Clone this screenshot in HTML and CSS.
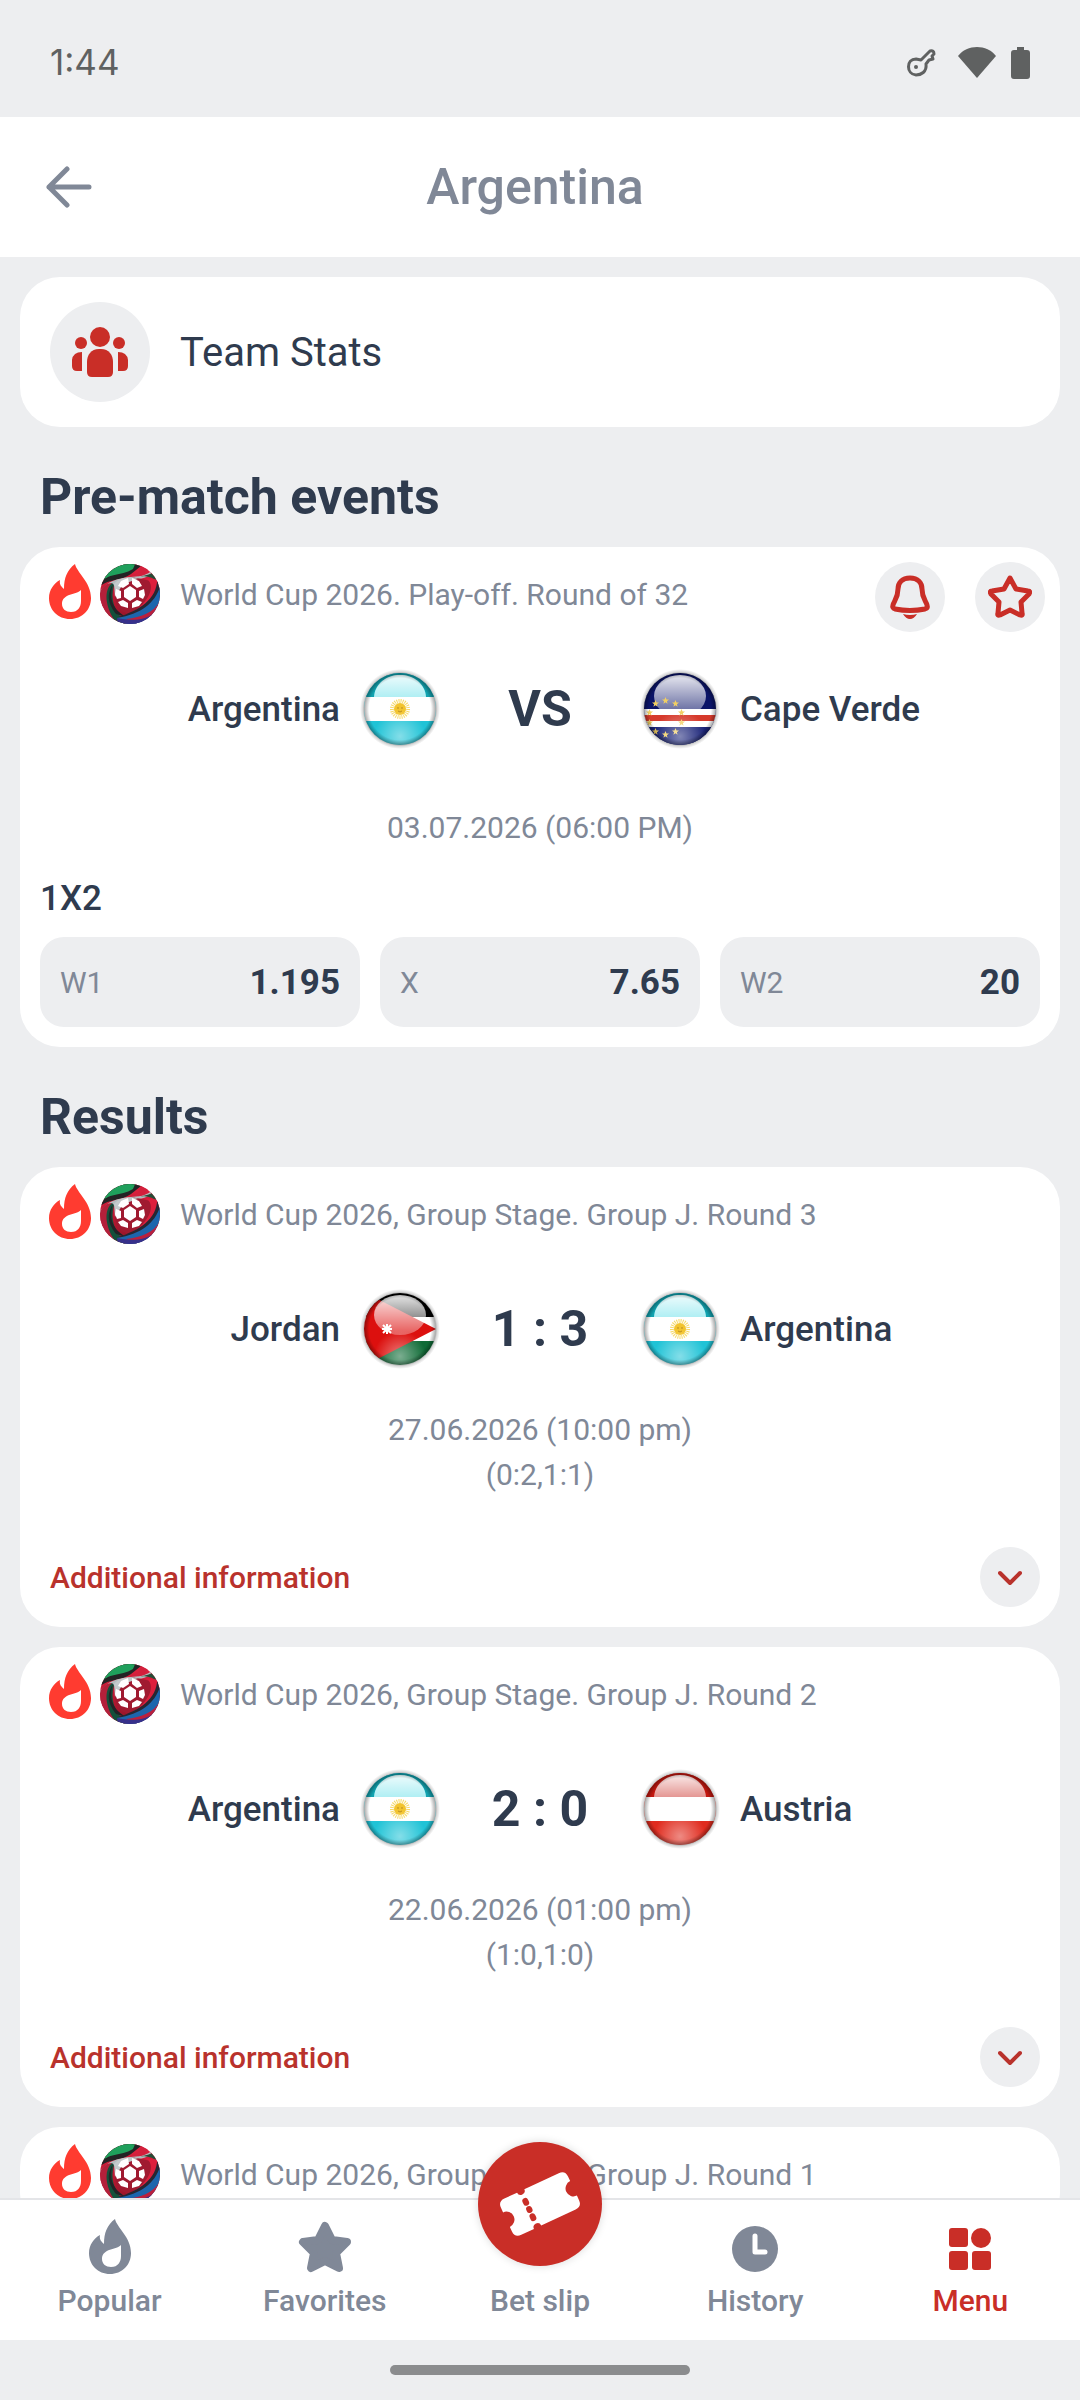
FILE: index.html
```
<!DOCTYPE html>
<html lang="en">
    <head>
        <meta charset="UTF-8" />
        <meta name="viewport" content="width=device-width, initial-scale=1.0" />
        <title>Argentina</title>
        <link rel="stylesheet" href="styles.css">
    </head>
    <body>
        <!-- shared icons -->
        <svg class="sprite" aria-hidden="true">
            <defs>
                <clipPath id="clipFlag"><circle cx="40" cy="40" r="36" /></clipPath>
                <clipPath id="clipBall"><circle cx="30" cy="30" r="30" /></clipPath>
                <radialGradient id="halo">
                    <stop offset="0.86" stop-color="#000" stop-opacity="0.5" />
                    <stop offset="0.93" stop-color="#000" stop-opacity="0.15" />
                    <stop offset="1" stop-color="#000" stop-opacity="0" />
                </radialGradient>
                <radialGradient id="edge">
                    <stop offset="0.86" stop-color="#000" stop-opacity="0" />
                    <stop offset="1" stop-color="#000" stop-opacity="0.35" />
                </radialGradient>
                <radialGradient id="glow" cx="0.5" cy="0.88" r="0.36">
                    <stop offset="0" stop-color="#fff" stop-opacity="0.45" />
                    <stop offset="1" stop-color="#fff" stop-opacity="0" />
                </radialGradient>
                <linearGradient id="shine" x1="0" y1="0" x2="0" y2="1">
                    <stop offset="0" stop-color="#fff" stop-opacity="0.9" />
                    <stop offset="1" stop-color="#fff" stop-opacity="0.3" />
                </linearGradient>
                <linearGradient id="shineSoft" x1="0" y1="0" x2="0" y2="1">
                    <stop offset="0" stop-color="#fff" stop-opacity="0.9" />
                    <stop offset="1" stop-color="#fff" stop-opacity="0.55" />
                </linearGradient>
                <linearGradient id="ballBase" x1="0" y1="0" x2="0" y2="1">
                    <stop offset="0" stop-color="#e02340" />
                    <stop offset="0.5" stop-color="#c01833" />
                    <stop offset="1" stop-color="#8c1426" />
                </linearGradient>
            </defs>

            <symbol id="flame" viewBox="0 0 42 55">
                <path fill-rule="evenodd" d="M26 0C28 9 42 18 42 34C42 46 33 55 21 55C9 55 0 46 0 34C0 26 5 19 11 16C10 21 13 23 15 25C15 14 18 6 26 0ZM32 26C28 31 13 29 13 40C13 45 17 48 22 48C29 48 32 43 32 37Z" />
            </symbol>

            <symbol id="ball" viewBox="0 0 60 60">
                <g clip-path="url(#clipBall)">
                    <rect width="60" height="60" fill="url(#ballBase)" />
                    <path fill="#232425" d="M-2 24C8 14 20 18 31 10L46 -2H-2Z" />
                    <path fill="#1fa05c" d="M0 20C8 8 20 13 33 5L36 -2H-2V20Z" />
                    <path fill="#d2203c" d="M30 12C40 10 41 4 41 -1L49 4C46 10 38 14 28 14Z" />
                    <path fill="#b6bcbe" d="M0 27C12 12 28 14 41 12C49 10 51 7 52 6C52 12 44 15 35 15L22 18L14 22C8 20 4 24 0 30Z" />
                    <path fill="#254b35" d="M36 13C47 12 51 9 54 9L58 17C48 11 42 12 36 13Z" />
                    <path fill="#b3203a" d="M0 29C1 24 6 19 12 19C7 28 7 42 20 60L-2 58V30Z" />
                    <path fill="#14503a" d="M12 19C4 26 4 42 17 60H26C14 46 10 36 14 21Z" />
                    <path fill="#222326" d="M13 20C9 33 11 44 26 53L16 50C6 37 8 28 13 20Z" />
                    <path fill="#a01a30" d="M15 19V34C16 46 25 51 36 50L56 34V18L36 14C26 13 22 18 15 24Z" />
                    <path fill="#c3cacb" d="M14 20C21 12 31 13 38 15L23 20L15 33Z" />
                    <path fill="#dd1f3d" d="M45 14C58 20 48 40 31 49L58 42V16Z" />
                    <path fill="#272733" d="M57 12C59 34 40 46 18 53C45 53 63 43 61 20Z" />
                    <path fill="#1d65ad" d="M61 19C57 37 43 50 17 54L30 62L62 52Z" />
                    <path fill="#ba203d" d="M61 35C55 48 43 53 26 55L29 57C46 57 57 50 61 43Z" />
                    <path fill="#37308b" d="M17 54C30 57 45 57 54 49L44 62H18Z" />
                    <g fill="#fff">
                        <path d="M30 22L36 26V33L30 37L24 33V26Z" />
                        <path d="M21 17L28 14L29 20L23 24L18 22ZM32 14L39 17L42 22L37 24L32 20ZM16 25L21 27V34L17 35L15 30ZM44 25L45 31L43 35L39 33V27ZM18 38L23 36L28 39V44L21 42ZM32 39L37 36L42 38L39 42L32 44Z" />
                    </g>
                </g>
            </symbol>

            <symbol id="gloss" viewBox="0 0 80 80">
                <circle cx="40" cy="40" r="36" fill="url(#glow)" />
                <circle cx="40" cy="40" r="36" fill="url(#edge)" />
            </symbol>

            <symbol id="argentina" viewBox="0 0 80 80">
                <circle cx="40" cy="40" r="40" fill="url(#halo)" />
                <g clip-path="url(#clipFlag)">
                    <rect width="80" height="80" fill="#1fc3d6" />
                    <rect y="28" width="80" height="24" fill="#fff" />
                    <path fill="#12a3b0" d="M0 0H80V28H0Z" />
                    <path fill="#4fdbe6" d="M14 28C15 14 27 6 40 6S65 14 66 28Z" />
                    <path fill="url(#shineSoft)" d="M14 28C15 14 27 6 40 6S65 14 66 28Z" />
                </g>
                <circle cx="40" cy="40" r="8" fill="none" stroke="#f6d968" stroke-width="4" stroke-dasharray="1 1" />
                <circle cx="40" cy="40" r="6" fill="#f2c42f" />
                <path fill="none" stroke="#b98b22" d="M37 39H39M41 39H43M38 42Q40 44 42 42" />
                <use href="#gloss" />
            </symbol>

            <symbol id="austria" viewBox="0 0 80 80">
                <circle cx="40" cy="40" r="40" fill="url(#halo)" />
                <g clip-path="url(#clipFlag)">
                    <rect width="80" height="80" fill="#e02b1e" />
                    <rect y="28" width="80" height="24" fill="#fff" />
                    <path fill="#c4170f" d="M0 0H80V28H0Z" />
                    <path fill="url(#shineSoft)" d="M14 28C15 14 27 6 40 6S65 14 66 28Z" />
                </g>
                <use href="#gloss" />
            </symbol>

            <symbol id="jordan" viewBox="0 0 80 80">
                <circle cx="40" cy="40" r="40" fill="url(#halo)" />
                <g clip-path="url(#clipFlag)">
                    <rect width="80" height="80" fill="#fff" />
                    <rect width="80" height="28" fill="#000" />
                    <rect y="52" width="80" height="28" fill="#0f6b36" />
                    <path fill="#dc100e" d="M0 1L76 40L0 79Z" />
                    <ellipse cx="40" cy="26" rx="26" ry="20" fill="url(#shine)" />
                </g>
                <path stroke="#fff" stroke-width="2" d="M27 35V45M22 40H32M23 36L31 44M31 36L23 44" />
                <use href="#gloss" />
            </symbol>

            <symbol id="star5" viewBox="-10 -10 20 20">
                <path fill="#f1cf62" d="M0 -10L3 -3L10 -3L4 2L6 9L0 5L-6 9L-4 2L-10 -3L-3 -3Z" />
            </symbol>

            <symbol id="capeverde" viewBox="0 0 80 80">
                <circle cx="40" cy="40" r="40" fill="url(#halo)" />
                <g clip-path="url(#clipFlag)">
                    <rect width="80" height="80" fill="#0b1468" />
                    <ellipse cx="40" cy="27" rx="26" ry="21" fill="url(#shine)" />
                    <rect y="40" width="80" height="18" fill="#fff" />
                    <rect y="46" width="80" height="6" fill="#d63a2c" />
                    <path fill="#1a2378" d="M0 58H80V80H0Z" />
                    <use href="#star5" x="22" y="28" width="7" height="7" />
                    <use href="#star5" x="32" y="31" width="7" height="7" />
                    <use href="#star5" x="38" y="40" width="7" height="7" />
                    <use href="#star5" x="38" y="50" width="7" height="7" />
                    <use href="#star5" x="32" y="59" width="7" height="7" />
                    <use href="#star5" x="22" y="62" width="7" height="7" />
                    <use href="#star5" x="12" y="59" width="7" height="7" />
                    <use href="#star5" x="6" y="50" width="7" height="7" />
                    <use href="#star5" x="6" y="40" width="7" height="7" />
                    <use href="#star5" x="12" y="31" width="7" height="7" />
                </g>
                <use href="#gloss" />
            </symbol>

            <symbol id="chevron" viewBox="0 0 24 24">
                <path fill="none" stroke="currentColor" stroke-width="4" stroke-linecap="round" stroke-linejoin="round" d="M2 8L12 18L22 8" />
            </symbol>
        </svg>

        <!-- status bar -->
        <div class="status">
            <span class="time">1:44</span>
            <svg class="status-icons" viewBox="0 0 124 36" aria-hidden="true">
                <path fill="none" stroke="#5f6161" stroke-width="3" stroke-linejoin="round" d="M15 16L24 7Q28 6 28 10L26 12L27 15L23 16L20 20C21 28 15 31 10 31C0 30 0 15 10 15Z" />
                <circle cx="10" cy="23" r="2" fill="#5f6161" />
                <path fill="#5f6161" d="M71 34L52 12C61 0 81 0 90 12Z" />
                <path fill="#5f6161" d="M111 3H118V6H121Q124 6 124 9V32Q124 35 121 35H108Q105 35 105 32V9Q105 6 108 6H111Z" />
            </svg>
        </div>

        <header class="header">
            <button class="back" type="button" aria-label="Back">
                <svg width="46" height="42" viewBox="0 0 46 42">
                    <path fill="none" stroke="currentColor" stroke-width="5" stroke-linecap="round" stroke-linejoin="round" d="M21 3L3 21L21 39M3 21H43" />
                </svg>
            </button>
            <h1>Argentina</h1>
        </header>

        <main class="content">
            <a class="card team-stats" href="#">
                <span class="team-icon">
                    <svg width="60" height="60" viewBox="0 0 60 60" fill="currentColor">
                        <circle cx="30" cy="15" r="10" />
                        <circle cx="11" cy="21" r="6" />
                        <circle cx="49" cy="21" r="6" />
                        <path d="M29 27H31C39 27 43 33 43 40V50Q43 55 38 55H22Q17 55 17 50V40C17 33 21 27 29 27Z" />
                        <path d="M12 30V49H7Q2 49 2 44V38Q3 30 12 30ZM48 30V49H53Q58 49 58 44V38Q57 30 48 30Z" />
                    </svg>
                </span>
                Team Stats
            </a>

            <h2>Pre-match events</h2>
            <section class="card">
                <div class="event-head">
                    <div class="league">
                        <svg class="flame"><use href="#flame" /></svg>
                        <svg class="ball"><use href="#ball" /></svg>
                        <span>World Cup 2026. Play-off. Round of 32</span>
                    </div>
                    <div class="actions">
                        <button class="round" type="button" aria-label="Notifications">
                            <svg width="44" height="48" viewBox="0 0 44 48">
                                <path fill="none" stroke="currentColor" stroke-width="5" stroke-linejoin="round" d="M22 5C14 5 10 10 10 16C10 25 6 28 5 32Q4 35 7 36Q22 39 37 36Q40 35 39 32C38 28 34 25 34 16C34 10 30 5 22 5Z" />
                                <path fill="currentColor" d="M15 41Q22 43 29 41Q26 46 22 46Q18 46 15 41Z" />
                            </svg>
                        </button>
                        <button class="round" type="button" aria-label="Add to favorites">
                            <svg width="44" height="48" viewBox="0 0 44 48">
                                <path fill="none" stroke="currentColor" stroke-width="5" stroke-linejoin="round" d="M22 5L28 16L40 18Q43 18 41 21L33 29L34 40Q35 43 32 42L22 37L12 42Q9 43 10 40L11 29L3 21Q1 18 4 18L16 16Z" />
                            </svg>
                        </button>
                    </div>
                </div>
                <div class="teams">
                    <span class="team home">Argentina <svg class="flag"><use href="#argentina" /></svg></span>
                    <strong class="score">VS</strong>
                    <span class="team"><svg class="flag"><use href="#capeverde" /></svg> Cape Verde</span>
                </div>
                <p class="date upcoming">03.07.2026 (06:00 PM)</p>
                <h3>1X2</h3>
                <div class="odds">
                    <button class="odd" type="button">W1 <b>1.195</b></button>
                    <button class="odd" type="button">X <b>7.65</b></button>
                    <button class="odd" type="button">W2 <b>20</b></button>
                </div>
            </section>

            <h2>Results</h2>
            <section class="card">
                <div class="event-head">
                    <div class="league">
                        <svg class="flame"><use href="#flame" /></svg>
                        <svg class="ball"><use href="#ball" /></svg>
                        <span>World Cup 2026, Group Stage. Group J. Round 3</span>
                    </div>
                </div>
                <div class="teams">
                    <span class="team home">Jordan <svg class="flag"><use href="#jordan" /></svg></span>
                    <strong class="score">1 : 3</strong>
                    <span class="team"><svg class="flag"><use href="#argentina" /></svg> Argentina</span>
                </div>
                <p class="date">27.06.2026 (10:00 pm)<br>(0:2,1:1)</p>
                <button class="more" type="button">
                    Additional information
                    <span class="more-icon"><svg><use href="#chevron" /></svg></span>
                </button>
            </section>

            <section class="card">
                <div class="event-head">
                    <div class="league">
                        <svg class="flame"><use href="#flame" /></svg>
                        <svg class="ball"><use href="#ball" /></svg>
                        <span>World Cup 2026, Group Stage. Group J. Round 2</span>
                    </div>
                </div>
                <div class="teams">
                    <span class="team home">Argentina <svg class="flag"><use href="#argentina" /></svg></span>
                    <strong class="score">2 : 0</strong>
                    <span class="team"><svg class="flag"><use href="#austria" /></svg> Austria</span>
                </div>
                <p class="date">22.06.2026 (01:00 pm)<br>(1:0,1:0)</p>
                <button class="more" type="button">
                    Additional information
                    <span class="more-icon"><svg><use href="#chevron" /></svg></span>
                </button>
            </section>

            <section class="card">
                <div class="event-head">
                    <div class="league">
                        <svg class="flame"><use href="#flame" /></svg>
                        <svg class="ball"><use href="#ball" /></svg>
                        <span>World Cup 2026, Group Stage. Group J. Round 1</span>
                    </div>
                </div>
            </section>
        </main>

        <!-- bottom menu -->
        <nav class="nav">
            <a href="#">
                <svg class="nav-icon" viewBox="0 0 60 60" fill="currentColor"><use href="#flame" x="9" y="2" width="42" height="55" /></svg>
                Popular
            </a>
            <a href="#">
                <svg class="nav-icon" viewBox="0 0 60 60" fill="currentColor">
                    <path stroke="currentColor" stroke-width="8" stroke-linejoin="round" d="M30 9L37 23L52 25L41 36L44 51L30 44L16 51L19 36L8 25L23 23Z" />
                </svg>
                Favorites
            </a>
            <a href="#">
                <span class="slip">
                    <svg width="90" height="80" viewBox="-45 -40 90 80">
                        <g transform="rotate(-25)">
                            <path fill="#fff" d="M-30 -20H-16A4 4 0 0 0 -8 -20H30Q37 -20 37 -13V-8A8 8 0 0 0 37 8V13Q37 20 30 20H-8A4 4 0 0 0 -16 20H-30Q-37 20 -37 13V8A8 8 0 0 0 -37 -8V-13Q-37 -20 -30 -20Z" />
                            <path stroke="#c92e27" stroke-width="6" stroke-linecap="round" d="M-12 -9V-7M-12 0V1M-12 8V10" />
                        </g>
                    </svg>
                </span>
                Bet slip
            </a>
            <a href="#">
                <svg class="nav-icon" viewBox="0 0 60 60" fill="currentColor">
                    <circle cx="30" cy="32" r="23" />
                    <path fill="none" stroke="#fff" stroke-width="5" stroke-linecap="round" stroke-linejoin="round" d="M30 19V35H40" />
                </svg>
                History
            </a>
            <a class="active" href="#">
                <svg class="nav-icon" viewBox="0 0 60 60" fill="currentColor">
                    <rect x="9" y="11" width="19" height="19" rx="3" />
                    <circle cx="41" cy="21" r="10" />
                    <rect x="9" y="34" width="19" height="19" rx="3" />
                    <rect x="32" y="34" width="19" height="19" rx="3" />
                </svg>
                Menu
            </a>
        </nav>
        <div class="gesture"><span></span></div>
    </body>
</html>
```
FILE: styles.css
```
* {
    box-sizing: border-box;
}
body {
    display: flex;
    flex-direction: column;
    height: 100vh;
    margin: 0;
    background: #edeef0;
    color: #2f3b4e;
    font-family: Roboto, "Liberation Sans", sans-serif;
    font-size: 30px;
    line-height: 45px;
}
h1,
h2,
h3,
p {
    margin: 0;
}
a {
    color: inherit;
    text-decoration: none;
}
button {
    padding: 0;
    border: 0;
    background: none;
    color: inherit;
    font: inherit;
    text-align: left;
}
svg {
    display: block;
    flex: none;
}
.sprite {
    position: absolute;
    width: 0;
    height: 0;
}

/* status bar */
.status {
    display: flex;
    flex: none;
    align-items: center;
    justify-content: space-between;
    height: 117px;
    padding: 7px 50px 0;
    color: #5f6161;
}
.time {
    font-family: Inter, sans-serif;
    font-size: 35px;
}
.status-icons {
    width: 124px;
    height: 36px;
}

/* header */
.header {
    display: flex;
    flex: none;
    align-items: center;
    height: 140px;
    padding: 0 130px 0 0;
    background: #fff;
    color: #808897;
}
.back {
    width: 120px;
    padding: 30px 0 30px 46px;
}
.header h1 {
    flex: 1;
    font-size: 50px;
    font-weight: 500;
    line-height: 60px;
    text-align: center;
}

/* content */
.content {
    flex: 1;
    min-height: 0;
    padding: 20px;
    overflow-y: auto;
    scrollbar-width: none;
}
.content h2 {
    padding: 40px 20px 20px;
    font-size: 50px;
    font-weight: 700;
    line-height: 60px;
}
.card {
    padding: 15px 20px 20px;
    border-radius: 40px;
    background: #fff;
}
.card + .card {
    margin-top: 20px;
}
.team-stats {
    display: flex;
    align-items: center;
    gap: 30px;
    padding: 25px 30px;
    font-size: 40px;
}
.team-icon {
    display: grid;
    place-items: center;
    width: 100px;
    height: 100px;
    border-radius: 50%;
    background: #edeef0;
    color: #c92e27;
}

/* event card */
.event-head {
    display: flex;
    align-items: flex-start;
    justify-content: space-between;
    height: 70px;
    margin-right: -5px;
}
.league {
    display: flex;
    align-items: center;
    height: 64px;
    padding-left: 9px;
    color: #808897;
}
.flame {
    width: 42px;
    height: 55px;
    margin: 0 9px 5px 0;
    fill: #ff3b30;
}
.ball {
    width: 60px;
    height: 60px;
    margin-right: 20px;
}
.actions {
    display: flex;
    gap: 30px;
}
.round {
    display: grid;
    place-items: center;
    width: 70px;
    height: 70px;
    border-radius: 50%;
    background: #edeef0;
    color: #c92e27;
}
.teams {
    display: grid;
    grid-template-columns: 1fr 200px 1fr;
    align-items: center;
    margin-top: 37px;
}
.team {
    display: flex;
    align-items: center;
    gap: 20px;
    font-size: 35px;
    font-weight: 500;
}
.home {
    justify-content: flex-end;
}
.flag {
    width: 80px;
    height: 80px;
}
.score {
    font-size: 50px;
    font-weight: 700;
    text-align: center;
}
.date {
    margin-top: 38px;
    color: #808897;
    text-align: center;
}
.upcoming {
    margin-top: 56px;
}
.card h3 {
    margin-top: 24px;
    font-size: 35px;
    font-weight: 500;
    line-height: 50px;
}

/* odds */
.odds {
    display: grid;
    grid-template-columns: repeat(3, 1fr);
    gap: 20px;
    margin-top: 13px;
}
.odd {
    display: flex;
    align-items: center;
    justify-content: space-between;
    height: 90px;
    padding: 0 20px;
    border-radius: 24px;
    background: #edeef0;
    color: #808897;
}
.odd b {
    color: #2f3b4e;
    font-size: 35px;
}

/* additional information row */
.more {
    display: flex;
    align-items: center;
    justify-content: space-between;
    width: 100%;
    margin-top: 50px;
    padding-left: 10px;
    color: #b9322c;
    font-weight: 500;
}
.more-icon {
    display: grid;
    place-items: center;
    width: 60px;
    height: 60px;
    border-radius: 50%;
    background: #edeef0;
}
.more-icon svg {
    width: 24px;
    height: 24px;
}

/* bottom menu */
.nav {
    position: relative;
    display: grid;
    flex: none;
    grid-template-columns: repeat(5, 1fr);
    height: 142px;
    padding: 0 2px;
    border-top: 2px solid #e4e5e8;
    background: #fff;
    color: #808897;
    font-weight: 500;
}
.nav a {
    display: flex;
    flex-direction: column;
    align-items: center;
    justify-content: flex-end;
    padding-bottom: 17px;
}
.nav-icon {
    width: 60px;
    height: 60px;
    margin-bottom: 1px;
}
.nav .active {
    color: #c92e27;
}
/* round button that rises over the list */
.slip {
    position: absolute;
    top: -58px;
    left: 50%;
    display: grid;
    place-items: center;
    width: 124px;
    height: 124px;
    margin-left: -62px;
    border-radius: 50%;
    background: #c92e27;
    box-shadow: 0 0 8px rgba(0, 0, 0, 0.15);
}
.gesture {
    display: grid;
    flex: none;
    place-items: center;
    height: 60px;
}
.gesture span {
    width: 300px;
    height: 10px;
    border-radius: 5px;
    background: #8b8c8e;
}
```
